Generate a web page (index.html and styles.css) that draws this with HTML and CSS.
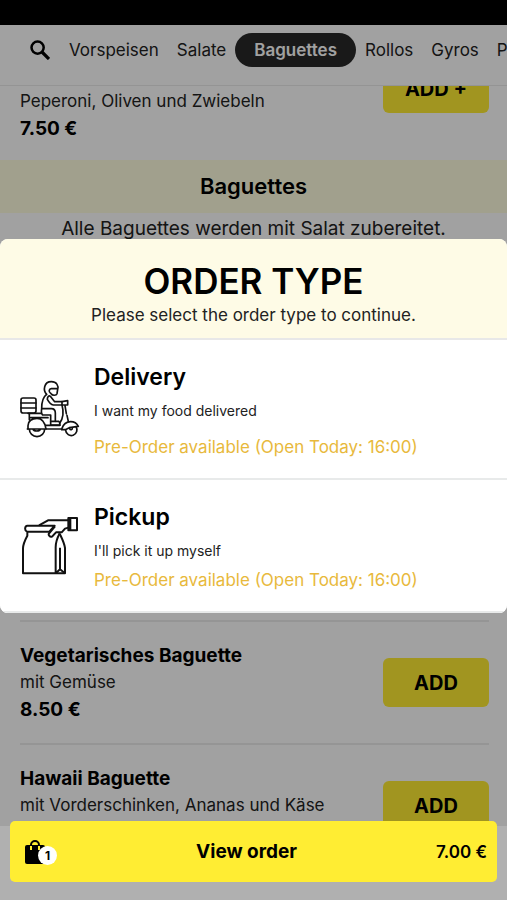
FILE: index.html
```html
<!DOCTYPE html>
<html lang="de">
<head>
    <meta charset="UTF-8">
    <meta name="viewport" content="width=device-width, initial-scale=1.0">
    <title>Baguettes</title>
    <link rel="stylesheet" href="styles.css">
</head>
<body>
    <div class="status-bar"></div>

    <nav class="categories">
        <button class="search" aria-label="Suche">
            <svg viewBox="0 0 20 20" width="20" height="20">
                <circle cx="7.6" cy="7.6" r="6.1" fill="none" stroke="#000" stroke-width="2.5"/>
                <path d="M12 12l7 7" stroke="#000" stroke-width="3.2"/>
            </svg>
        </button>
        <a href="#vorspeisen">Vorspeisen</a>
        <a href="#salate">Salate</a>
        <a href="#baguettes" class="active">Baguettes</a>
        <a href="#rollos">Rollos</a>
        <a href="#gyros">Gyros</a>
        <a href="#p">P</a>
    </nav>

    <main class="menu">
        <div class="item item-first">
            <div class="info">
                <p>Peperoni, Oliven und Zwiebeln</p>
                <strong>7.50 €</strong>
            </div>
            <button class="add">ADD +</button>
        </div>

        <h2 class="section-title" id="baguettes">Baguettes</h2>
        <p class="section-note">Alle Baguettes werden mit Salat zubereitet.</p>

        <div class="items">
            <div class="item">
                <div class="info">
                    <h3>Vegetarisches Baguette</h3>
                    <p>mit Gemüse</p>
                    <strong>8.50 €</strong>
                </div>
                <button class="add">ADD</button>
            </div>
            <div class="item">
                <div class="info">
                    <h3>Hawaii Baguette</h3>
                    <p>mit Vorderschinken, Ananas und Käse</p>
                    <strong>&nbsp;</strong>
                </div>
                <button class="add">ADD</button>
            </div>
        </div>
    </main>

    <div class="overlay">
        <div class="modal" role="dialog" aria-labelledby="modal-title">
            <header class="modal-header">
                <h1 id="modal-title">ORDER TYPE</h1>
                <p>Please select the order type to continue.</p>
            </header>

            <button class="option delivery">
                <svg class="option-icon" viewBox="60 55 180 180" fill="none" stroke="#111" stroke-width="5" stroke-linejoin="round" stroke-linecap="round">
                    <!-- box -->
                    <rect x="63" y="112" width="45" height="45" rx="6"/>
                    <path d="M63 127h45M63 142h45"/>
                    <!-- rider -->
                    <path d="M140 101c-12-12-8-38 14-38 16 0 22 12 19 23l-2 13c-2 6-14 6-17 1M172 84h-18c-7 0-9 10-2 14"/>
                    <path d="M139 102c-11 8-14 24-14 42h29c9 0 12 6 12 13v25h10c4 2 4 6 4 11h-28v-30h-24c-5-4-4-13-3-19"/>
                    <path d="M151 107l13 16h22v10h-26c-9-2-14-10-18-17 0-8 5-12 9-9M152 182h14"/>
                    <!-- scooter -->
                    <path d="M186 123l17-3v13l-17 0M186 133c6 22 3 41-7 55M195 135l4 24M201 164l4 18"/>
                    <path d="M84 158h40M88 159v18M92 171h52M84 205v-10c0-14 12-22 27-22 15 0 24 12 27 32M138 205h47c4-12 14-22 27-22 11 0 19 6 23 14l-27 4-12 6h-11M136 194h44"/>
                    <path d="M88 205a23 23 0 0 0 46 0zM197 209a17 17 0 1 0 31-11M99 205c2 8 20 8 23 0M209 204c2 5 9 4 8-2M82 205h56"/>
                </svg>
                <span class="option-text">
                    <span class="option-name">Delivery</span>
                    <span class="option-desc">I want my food delivered</span>
                    <span class="option-hours">Pre-Order available (Open Today: 16:00)</span>
                </span>
            </button>

            <button class="option pickup">
                <svg class="option-icon" viewBox="60 45 180 180" fill="none" stroke="#111" stroke-width="6" stroke-linejoin="round">
                    <!-- bag -->
                    <path d="M81 92c-8-3-7-18 1-18h82l-16 18zM82 92v12c-8 15-13 25-13 38v75h126v-76c-2-15-7-24-16-43"/>
                    <path d="M179 97c-8 15-12 27-12 42v78M180 140v65M168 216l12-11 14 11"/>
                    <!-- hand -->
                    <path d="M117 73l27-15h61M205 80l-10 3-10 11h-17l-11 12c-7 4-14-4-9-10l17-20"/>
                    <path d="M205 51h26v37h-26zM211 51v37"/>
                </svg>
                <span class="option-text">
                    <span class="option-name">Pickup</span>
                    <span class="option-desc">I'll pick it up myself</span>
                    <span class="option-hours">Pre-Order available (Open Today: 16:00)</span>
                </span>
            </button>
        </div>
    </div>

    <footer class="cart">
        <button class="view-order">
            <span class="bag">
                <svg viewBox="0 0 22 26" width="22" height="26">
                    <path d="M6 9V6a4 4 0 0 1 8 0v3" fill="none" stroke="#000" stroke-width="2"/>
                    <path d="M2 6h16q2 0 2 2v17H2q-2 0-2-2V8q0-2 2-2z"/>
                    <path d="M6 7v4M14 7v4" stroke="#ffed33" stroke-width="2"/>
                </svg>
                <span class="count">1</span>
            </span>
            <span class="label">View order</span>
            <span class="total">7.00 €</span>
        </button>
    </footer>
</body>
</html>
```
FILE: styles.css
```css
* {
    box-sizing: border-box;
}

body {
    margin: 0;
    height: 100vh;
    display: flex;
    flex-direction: column;
    overflow: hidden;
    background: #fff;
    color: #000;
    font-family: Inter, "Liberation Sans", sans-serif;
    font-size: 17px;
}

h1, h2, h3, p {
    margin: 0;
}

button {
    border: 0;
    padding: 0;
    font-family: inherit;
    color: #000;
    cursor: pointer;
}

.status-bar {
    flex: none;
    height: 25px;
    background: #000;
}

/* category navigation */
.categories {
    flex: none;
    display: flex;
    align-items: flex-start;
    height: 61px;
    padding: 8px 0 0 30px;
    background: #fff;
    border-bottom: 1px solid #eaeaea;
    overflow: hidden;
    z-index: 1;
}

.search {
    flex: none;
    height: 34px;
    margin-right: 10px;
    background: none;
}

.search svg {
    display: block;
}

.categories a {
    flex: none;
    padding: 0 9px;
    line-height: 34px;
    color: #222;
    text-decoration: none;
}

.categories .active {
    padding: 0 19px;
    border-radius: 17px;
    background: #292929;
    color: #fff;
    font-weight: 600;
}

/* menu */
.menu {
    flex: 1;
    min-height: 0;
}

.item {
    display: flex;
    justify-content: space-between;
    align-items: center;
    padding: 20px 0;
    border-top: 2px solid #ececec;
}

.item-first {
    align-items: flex-start;
    margin: -44px 18px 0 20px;
    padding: 22px 0 18px;
    border: 0;
}

.item-first .info {
    padding-top: 24px;
}

.info {
    line-height: 27px;
}

.info h3, .info strong {
    display: block;
    font-size: 19px;
    font-weight: 700;
}

.info p {
    color: #222;
}

.add {
    flex: none;
    width: 106px;
    height: 49px;
    border-radius: 6px;
    background: #ffed33;
    font-size: 20px;
    font-weight: 700;
}

.section-title {
    background: #fffee0;
    font-size: 22px;
    font-weight: 600;
    line-height: 53px;
    text-align: center;
}

.section-note {
    color: #222;
    font-size: 19px;
    line-height: 32px;
    text-align: center;
}

.items {
    margin: 0 18px 0 20px;
    padding-top: 375px;
}

/* order type dialog */
.overlay {
    position: fixed;
    top: 25px;
    right: 0;
    bottom: 0;
    left: 0;
    display: flex;
    align-items: center;
    padding-bottom: 74px;
    background: rgba(0, 0, 0, .37);
    z-index: 2;
}

.modal {
    width: 100%;
    border-radius: 8px;
    background: #fff;
    overflow: hidden;
}

.modal-header {
    padding: 20px 0 10px;
    background: #fefbe6;
    border-bottom: 2px solid #e8e8e8;
    text-align: center;
}

.modal-header h1 {
    font-size: 35px;
    font-weight: 600;
    line-height: 44px;
}

.modal-header p {
    color: #222;
    line-height: 25px;
}

.option {
    display: flex;
    align-items: center;
    gap: 14px;
    width: 100%;
    padding: 19px 20px 18px;
    background: #fff;
    border-bottom: 2px solid #e8eaea;
    text-align: left;
}

.option-icon {
    flex: none;
    width: 60px;
    height: 60px;
}

.option-text {
    display: flex;
    flex-direction: column;
}

.option-name {
    font-size: 23px;
    font-weight: 600;
    line-height: 36px;
}

.option-desc {
    color: #222;
    font-size: 14px;
    line-height: 32px;
}

.option-hours {
    color: #e8b93c;
    font-size: 17px;
    line-height: 26px;
}

.delivery .option-hours {
    padding-top: 7px;
}

/* cart bar */
.cart {
    position: fixed;
    right: 0;
    bottom: 0;
    left: 0;
    height: 74px;
    padding: 0 10px;
    background: #b0b0b0;
    z-index: 3;
}

.view-order {
    display: flex;
    justify-content: space-between;
    align-items: center;
    width: 100%;
    height: 61px;
    margin-top: -5px;
    padding: 0 10px 0 15px;
    border-radius: 5px;
    background: #ffed33;
}

.bag {
    position: relative;
    width: 32px;
    height: 26px;
}

.bag svg {
    display: block;
}

.count {
    position: absolute;
    right: 0;
    bottom: 0;
    width: 19px;
    height: 19px;
    border-radius: 50%;
    background: #fff;
    font-size: 12px;
    font-weight: 700;
    line-height: 19px;
    text-align: center;
}

.label {
    font-size: 19px;
    font-weight: 700;
}

.total {
    font-size: 17px;
    font-weight: 600;
}
```
